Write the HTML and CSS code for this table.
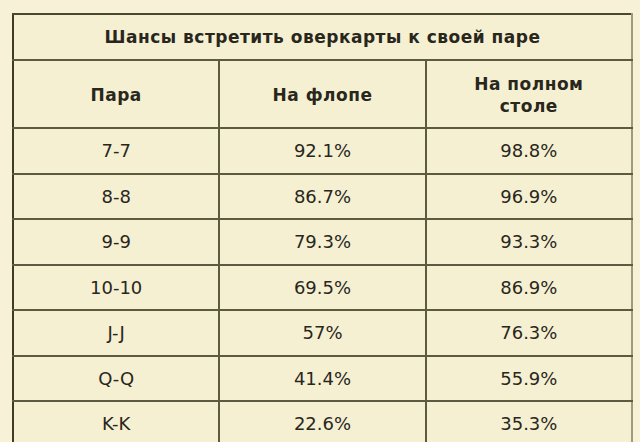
FILE: index.html
```html
<!DOCTYPE html>
<html lang="ru">
<head>
<meta charset="utf-8">
<link rel="stylesheet" href="styles.css">
</head>
<body>
<table class="odds">
  <tr class="title-row"><th colspan="3">Шансы встретить оверкарты к своей паре</th></tr>
  <tr class="head-row"><th>Пара</th><th>На флопе</th><th>На полном<br>столе</th></tr>
  <tr><td>7-7</td><td>92.1%</td><td>98.8%</td></tr>
  <tr><td>8-8</td><td>86.7%</td><td>96.9%</td></tr>
  <tr><td>9-9</td><td>79.3%</td><td>93.3%</td></tr>
  <tr><td>10-10</td><td>69.5%</td><td>86.9%</td></tr>
  <tr><td>J-J</td><td>57%</td><td>76.3%</td></tr>
  <tr><td>Q-Q</td><td>41.4%</td><td>55.9%</td></tr>
  <tr><td>K-K</td><td>22.6%</td><td>35.3%</td></tr>
</table>
</body>
</html>
```
FILE: styles.css
```css
html, body {
  margin: 0;
  background: #f7f2d7;
}
body {
  padding: 13px 0 0 12px;
  font-family: "DejaVu Sans", sans-serif;
  color: #29271c;
}
.odds {
  border-collapse: collapse;
  width: 621px;
  table-layout: fixed;
  background: #f6f0d3;
  border-left: 2px solid #3f3c26;
  border-top: 2px solid #4a4830;
  border-right: 2px solid #9e9a7c;
}
.odds th, .odds td {
  border: 2px solid #5c5a40;
  text-align: center;
  padding: 0;
}
.odds tr:first-child th { border-top-color: #4a4830; }
.odds tr > :last-child { border-right-color: #9e9a7c; }
.odds tr > :first-child { border-left-color: #3f3c26; }
.title-row th {
  height: 44px;
  font-size: 17px;
  font-weight: bold;
  letter-spacing: 0.5px;
}
.head-row th {
  height: 64px;
  font-size: 17px;
  font-weight: bold;
  letter-spacing: 0.5px;
  line-height: 22px;
  padding-top: 2px;
}
.odds td {
  height: 43.5px;
  font-size: 18px;
}
```
